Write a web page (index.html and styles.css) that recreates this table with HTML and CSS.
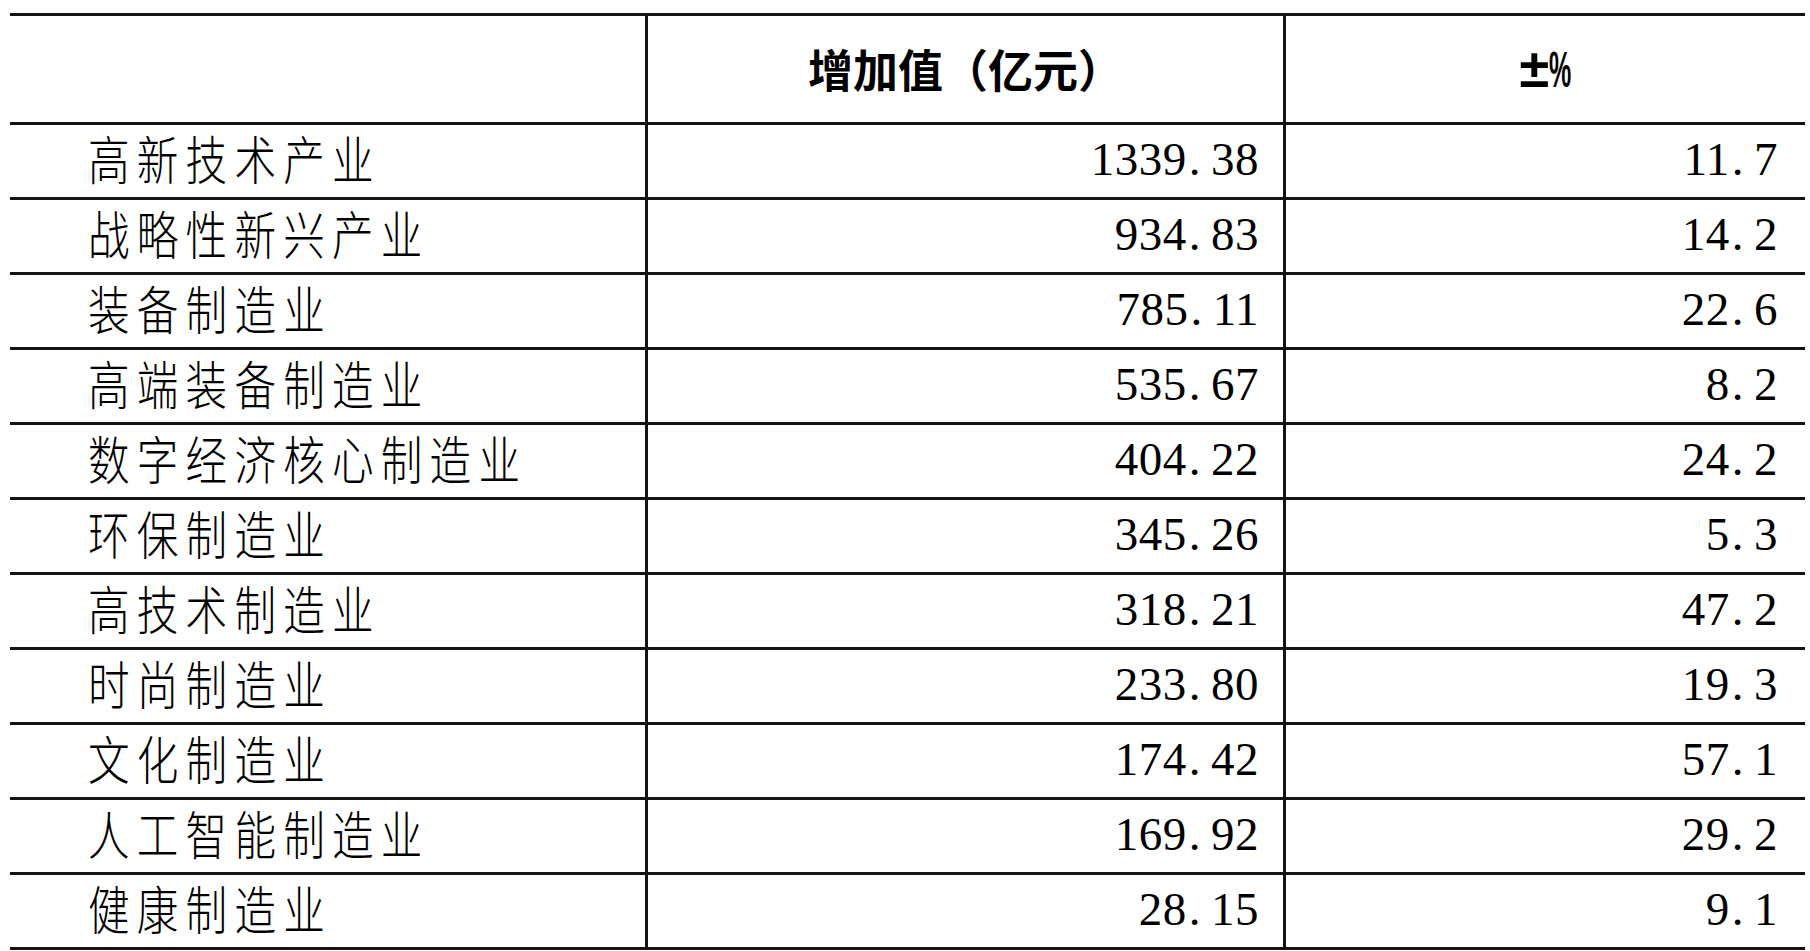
FILE: index.html
```html
<!DOCTYPE html>
<html lang="zh-CN">
<head>
<meta charset="utf-8">
<title>增加值</title>
<link rel="stylesheet" href="styles.css">
</head>
<body>
<table class="stats">
  <colgroup><col class="c-name"><col class="c-val"><col class="c-pct"></colgroup>
  <thead>
    <tr>
      <th class="name"></th>
      <th class="val"><span class="hd">增加值（亿元）</span></th>
      <th class="pct"><span class="pm">±</span><span class="pc">%</span></th>
    </tr>
  </thead>
  <tbody>
    <tr><td class="name"><span class="lbl">高新技术产业</span></td><td class="val">1339<span class="pt">.</span>38</td><td class="pct">11<span class="pt">.</span>7</td></tr>
    <tr><td class="name"><span class="lbl">战略性新兴产业</span></td><td class="val">934<span class="pt">.</span>83</td><td class="pct">14<span class="pt">.</span>2</td></tr>
    <tr><td class="name"><span class="lbl">装备制造业</span></td><td class="val">785<span class="pt">.</span>11</td><td class="pct">22<span class="pt">.</span>6</td></tr>
    <tr><td class="name"><span class="lbl">高端装备制造业</span></td><td class="val">535<span class="pt">.</span>67</td><td class="pct">8<span class="pt">.</span>2</td></tr>
    <tr><td class="name"><span class="lbl">数字经济核心制造业</span></td><td class="val">404<span class="pt">.</span>22</td><td class="pct">24<span class="pt">.</span>2</td></tr>
    <tr><td class="name"><span class="lbl">环保制造业</span></td><td class="val">345<span class="pt">.</span>26</td><td class="pct">5<span class="pt">.</span>3</td></tr>
    <tr><td class="name"><span class="lbl">高技术制造业</span></td><td class="val">318<span class="pt">.</span>21</td><td class="pct">47<span class="pt">.</span>2</td></tr>
    <tr><td class="name"><span class="lbl">时尚制造业</span></td><td class="val">233<span class="pt">.</span>80</td><td class="pct">19<span class="pt">.</span>3</td></tr>
    <tr><td class="name"><span class="lbl">文化制造业</span></td><td class="val">174<span class="pt">.</span>42</td><td class="pct">57<span class="pt">.</span>1</td></tr>
    <tr><td class="name"><span class="lbl">人工智能制造业</span></td><td class="val">169<span class="pt">.</span>92</td><td class="pct">29<span class="pt">.</span>2</td></tr>
    <tr><td class="name"><span class="lbl">健康制造业</span></td><td class="val">28<span class="pt">.</span>15</td><td class="pct">9<span class="pt">.</span>1</td></tr>
  </tbody>
</table>
</body>
</html>
```
FILE: styles.css
```css
html, body {
  margin: 0;
  padding: 0;
  background: #fff;
}

body {
  padding: 13px 0 0 10px;
  color: #000;
}

.stats {
  border-collapse: separate;
  border-spacing: 0;
  table-layout: fixed;
  width: 1795px;
  border-top: 3px solid #141414;
}

.c-name { width: 638px; }
.c-val  { width: 638px; }
.c-pct  { width: 519px; }

.stats th,
.stats td {
  box-sizing: border-box;
  padding: 0;
  border-bottom: 3px solid #141414;
  white-space: nowrap;
}

.stats .name,
.stats .val {
  border-right: 3px solid #141414;
}

.stats thead th {
  height: 109px;
  text-align: center;
  vertical-align: middle;
  font-family: "Noto Sans CJK SC", "Noto Sans", sans-serif;
  font-weight: 700;
  font-size: 45px;
  line-height: 1;
  padding-bottom: 2px;
}

.hd {
  display: inline-block;
  text-spacing-trim: space-all;
  font-feature-settings: "halt" 0, "chws" 0;
}

.pm {
  display: inline-block;
  font-family: "Liberation Sans", Arial, sans-serif;
  font-weight: 700;
  font-size: 54px;
}

.pc {
  display: inline-block;
  font-family: "Liberation Sans", Arial, sans-serif;
  font-weight: 700;
  font-size: 50px;
  transform: scaleX(0.5);
  transform-origin: left center;
  margin-right: -22px;
}

.stats tbody td {
  height: 75px;
  vertical-align: middle;
}

.stats tbody td.name {
  padding: 0 0 6px 78px;
  text-align: left;
}

.lbl {
  display: inline-block;
  font-family: "Noto Sans CJK SC", "Noto Sans CJK JP", sans-serif;
  font-weight: 300;
  font-size: 52px;
  line-height: 1.2;
  letter-spacing: 9px;
  transform: scaleX(0.8);
  transform-origin: left center;
}

.stats tbody td.val,
.stats tbody td.pct {
  text-align: right;
  font-family: "Liberation Serif", "Times New Roman", serif;
  font-size: 47px;
  line-height: 1;
  letter-spacing: 0.5px;
  padding-bottom: 4px;
}

.stats tbody td.val { padding-right: 24px; }
.stats tbody td.pct { padding-right: 27px; }

.pt {
  display: inline-block;
  padding: 0 10px 0 2px;
}
```
